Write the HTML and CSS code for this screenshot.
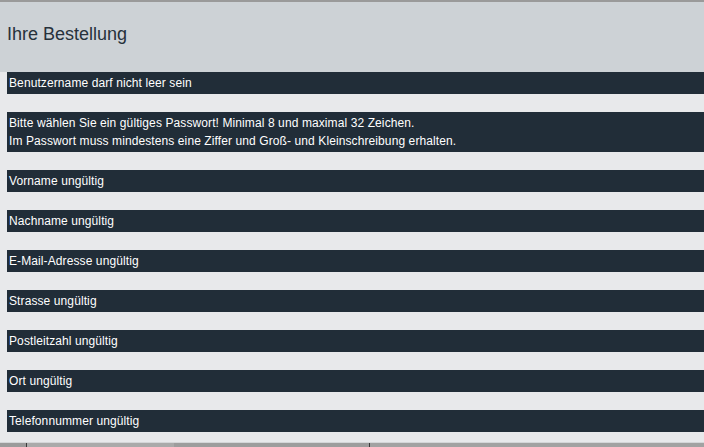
FILE: index.html
```html
<!DOCTYPE html>
<html lang="de">
<head>
<meta charset="utf-8">
<title>Ihre Bestellung</title>
<link rel="stylesheet" href="styles.css">
</head>
<body>
<div class="page">
  <header class="head">
    <h1 class="title">Ihre Bestellung</h1>
  </header>
  <main class="errors">
    <div class="bar">Benutzername darf nicht leer sein</div>
    <div class="bar">Bitte wählen Sie ein gültiges Passwort! Minimal 8 und maximal 32 Zeichen.<br>Im Passwort muss mindestens eine Ziffer und Groß- und Kleinschreibung erhalten.</div>
    <div class="bar">Vorname ungültig</div>
    <div class="bar">Nachname ungültig</div>
    <div class="bar">E-Mail-Adresse ungültig</div>
    <div class="bar">Strasse ungültig</div>
    <div class="bar">Postleitzahl ungültig</div>
    <div class="bar">Ort ungültig</div>
    <div class="bar">Telefonnummer ungültig</div>
  </main>
  <footer class="foot">
    <span class="seg s1"></span>
    <span class="seg line"></span>
    <span class="seg s2"></span>
    <span class="seg s3"></span>
    <span class="seg line"></span>
    <span class="seg s4"></span>
  </footer>
</div>
</body>
</html>
```

FILE: styles.css
```css
html, body {
  margin: 0;
  padding: 0;
  height: 447px;
  overflow: hidden;
  background: #e8e9eb;
}
.page {
  display: flex;
  flex-direction: column;
  height: 447px;
  font-family: "Liberation Sans", Arial, Helvetica, sans-serif;
}
.head {
  border-top: 2px solid #9a9a9a;
  background: #cdd2d6;
  height: 70px;
  display: flex;
  align-items: flex-start;
  padding-left: 7px;
}
.title {
  margin: 21px 0 0 0;
  font-size: 18px;
  font-weight: normal;
  line-height: 22px;
  color: #26313b;
}
.errors {
  display: flex;
  flex-direction: column;
  gap: 18px;
  padding-left: 7px;
  flex: 1;
}
.bar {
  background: #212d38;
  color: #ffffff;
  font-size: 12px;
  line-height: 18px;
  letter-spacing: 0.1px;
  padding: 2px;
}
.foot {
  display: flex;
  height: 4px;
  border-top: 1px solid #d4d6d8;
}
.seg { display: block; height: 100%; }
.s1 { width: 26px; background: #9b9b9b; }
.line { width: 1px; background: #3a3a3a; }
.s2 { width: 147px; background: #aaaaaa; }
.s3 { width: 195px; background: #9d9d9d; }
.s4 { flex: 1; background: #a2a2a2; }
```
